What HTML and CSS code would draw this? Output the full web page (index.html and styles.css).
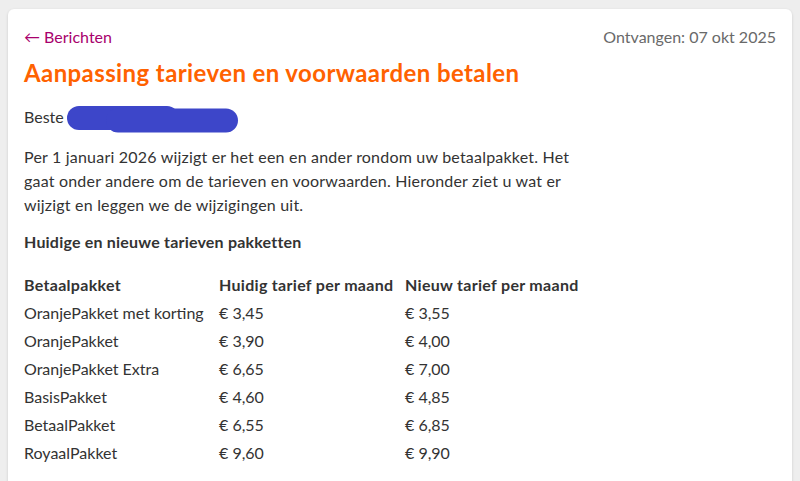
FILE: index.html
```html
<!DOCTYPE html>
<html lang="nl">
<head>
<meta charset="utf-8">
<title>Aanpassing tarieven</title>
<link rel="stylesheet" href="styles.css">
</head>
<body>
<main class="card">
  <div class="topbar">
    <a class="back" href="#"><span class="arrow">←</span> Berichten</a>
    <span class="date">Ontvangen: 07 okt 2025</span>
  </div>
  <h1 class="title">Aanpassing tarieven en voorwaarden betalen</h1>
  <p class="greeting">Beste <svg class="blob" width="174" height="27" viewBox="0 0 174 27" aria-hidden="true"><rect x="1" y="0" width="112" height="24" rx="12" fill="#3d46c9"/><rect x="40" y="2.5" width="132" height="24" rx="12" fill="#3d46c9"/></svg></p>
  <p class="intro">Per 1 januari 2026 wijzigt er het een en ander rondom uw betaalpakket. Het gaat onder andere om de tarieven en voorwaarden. Hieronder ziet u wat er wijzigt en leggen we de wijzigingen uit.</p>
  <h2 class="subtitle">Huidige en nieuwe tarieven pakketten</h2>
  <table class="rates">
    <thead>
      <tr><th class="c1">Betaalpakket</th><th class="c2">Huidig tarief per maand</th><th>Nieuw tarief per maand</th></tr>
    </thead>
    <tbody>
      <tr><td>OranjePakket met korting</td><td>€ 3,45</td><td>€ 3,55</td></tr>
      <tr><td>OranjePakket</td><td>€ 3,90</td><td>€ 4,00</td></tr>
      <tr><td>OranjePakket Extra</td><td>€ 6,65</td><td>€ 7,00</td></tr>
      <tr><td>BasisPakket</td><td>€ 4,60</td><td>€ 4,85</td></tr>
      <tr><td>BetaalPakket</td><td>€ 6,55</td><td>€ 6,85</td></tr>
      <tr><td>RoyaalPakket</td><td>€ 9,60</td><td>€ 9,90</td></tr>
    </tbody>
  </table>
</main>
</body>
</html>
```
FILE: styles.css
```css
html, body {
  margin: 0;
  padding: 0;
  background: #eeeeee;
  height: 100%;
  overflow: hidden;
}
body {
  font-family: "Lato", "Noto Sans", sans-serif;
  font-size: 16px;
  color: #333333;
}
.card {
  margin: 9px 8px 0 8px;
  background: #ffffff;
  border-radius: 6px 6px 0 0;
  box-shadow: 0 1px 3px rgba(0,0,0,0.15);
  padding: 16px 16px 24px 16px;
  min-height: 480px;
  box-sizing: border-box;
}
.topbar {
  display: flex;
  justify-content: space-between;
  align-items: center;
  line-height: 24px;
}
.back {
  color: #a8006c;
  text-decoration: none;
}
.date {
  color: #696969;
}
.title {
  margin: 8px 0 0 0;
  font-size: 24px;
  line-height: 32px;
  font-weight: 700;
  letter-spacing: 0.4px;
  color: #ff6200;
}
.greeting {
  margin: 16px 0 0 0;
  line-height: 24px;
  display: flex;
  align-items: center;
  gap: 2px;
  height: 24px;
}
.blob {
  display: block;
  margin-top: 4px;
}
.intro {
  margin: 16px 0 0 0;
  line-height: 24px;
  max-width: 560px;
  letter-spacing: 0.2px;
}
.subtitle {
  margin: 13px 0 0 0;
  font-size: 16px;
  line-height: 24px;
  font-weight: 700;
  letter-spacing: 0.2px;
}
.rates {
  margin-top: 16px;
  border-collapse: collapse;
}
.rates th, .rates td {
  padding: 0;
  height: 28px;
  text-align: left;
  vertical-align: middle;
  white-space: nowrap;
}
.rates th {
  font-weight: 700;
  letter-spacing: 0.3px;
}
.rates .c1 { width: 195px; }
.rates .c2 { width: 186px; }
```
